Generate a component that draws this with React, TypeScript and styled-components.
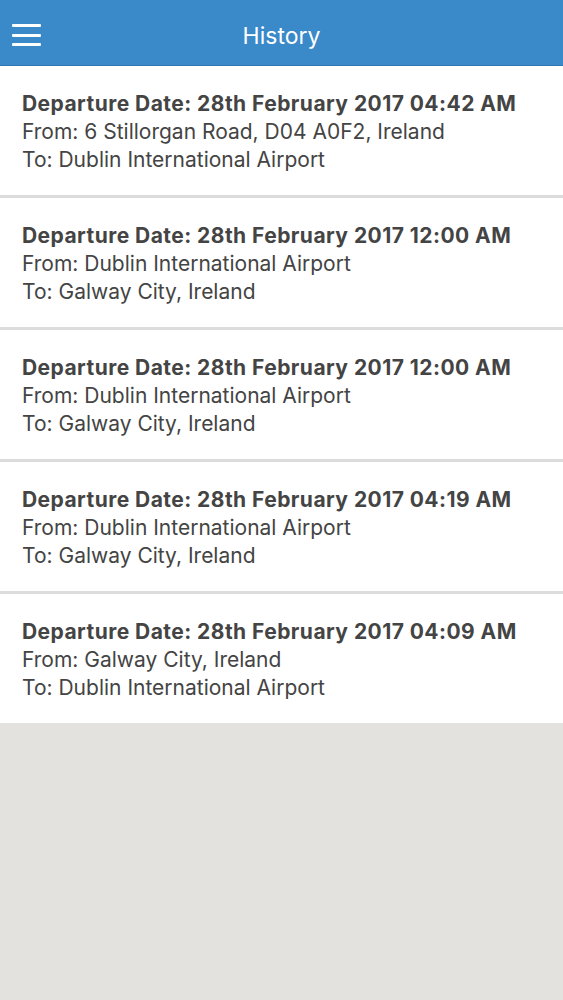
import React from "react";
import styled, { createGlobalStyle } from "styled-components";

type Trip = {
    date: string;
    from: string;
    to: string;
};

const trips: Trip[] = [
    {
        date: "28th February 2017 04:42 AM",
        from: "6 Stillorgan Road, D04 A0F2, Ireland",
        to: "Dublin International Airport",
    },
    {
        date: "28th February 2017 12:00 AM",
        from: "Dublin International Airport",
        to: "Galway City, Ireland",
    },
    {
        date: "28th February 2017 12:00 AM",
        from: "Dublin International Airport",
        to: "Galway City, Ireland",
    },
    {
        date: "28th February 2017 04:19 AM",
        from: "Dublin International Airport",
        to: "Galway City, Ireland",
    },
    {
        date: "28th February 2017 04:09 AM",
        from: "Galway City, Ireland",
        to: "Dublin International Airport",
    },
];

const GlobalStyle = createGlobalStyle`
    html, body {
        margin: 0;
        padding: 0;
        background: #e3e2de;
        font-family: Inter, "Liberation Sans", sans-serif;
    }
`;

const Page = styled.div`
    min-height: 1000px;
    background: #e3e2de;
    display: flex;
    flex-direction: column;
`;

const Header = styled.header`
    height: 65px;
    background: #3a89c9;
    border-bottom: 1px solid #2f74ad;
    display: flex;
    align-items: center;
    justify-content: center;
    position: relative;
`;

const Title = styled.h1`
    margin: 0;
    padding-top: 6px;
    color: #fff;
    font-size: 23px;
    font-weight: 400;
`;

const MenuButton = styled.button`
    position: absolute;
    left: 12px;
    top: 24px;
    width: 29px;
    height: 22px;
    padding: 0;
    border: 0;
    background: transparent;
    display: flex;
    flex-direction: column;
    justify-content: space-between;
    cursor: pointer;

    span {
        display: block;
        height: 3px;
        width: 100%;
        background: #fff;
        border-radius: 1px;
    }
`;

const List = styled.ul`
    list-style: none;
    margin: 0;
    padding: 0;
    background: #fff;
`;

const Row = styled.li`
    padding: 24px 22px 21px;
    border-bottom: 3px solid #dcdcdc;
    color: #444;
    font-size: 21px;
    line-height: 28px;

    &:last-child {
        border-bottom: 0;
        padding-bottom: 21px;
    }
`;

const Line = styled.div<{ $bold?: boolean }>`
    font-weight: ${(props) => (props.$bold ? 700 : 400)};
    letter-spacing: ${(props) => (props.$bold ? "0.45px" : "0")};
    white-space: nowrap;
`;

const App: React.FC = () => {
    return (
        <Page>
            <GlobalStyle />
            <Header>
                <MenuButton aria-label="menu">
                    <span />
                    <span />
                    <span />
                </MenuButton>
                <Title>History</Title>
            </Header>
            <List>
                {trips.map((trip, i) => (
                    <Row key={`trip-${i}`}>
                        <Line $bold>Departure Date: {trip.date}</Line>
                        <Line>From: {trip.from}</Line>
                        <Line>To: {trip.to}</Line>
                    </Row>
                ))}
            </List>
        </Page>
    );
};

export default App;
